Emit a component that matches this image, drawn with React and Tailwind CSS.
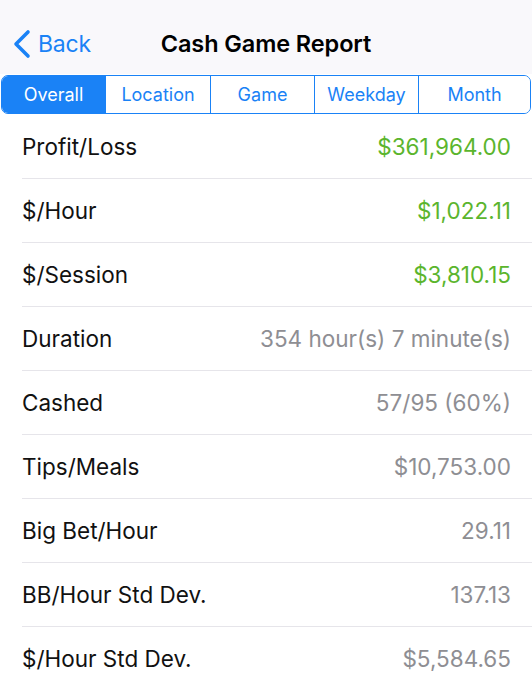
import React from 'react';

const tabs = ['Overall', 'Location', 'Game', 'Weekday', 'Month'];
const tabWidths = ['w-[103px]', 'w-[105px]', 'w-[104px]', 'w-[104px]', 'flex-1'];

const rows = [
  { label: 'Profit/Loss', value: '$361,964.00', green: true },
  { label: '$/Hour', value: '$1,022.11', green: true },
  { label: '$/Session', value: '$3,810.15', green: true },
  { label: 'Duration', value: '354 hour(s) 7 minute(s)' },
  { label: 'Cashed', value: '57/95 (60%)' },
  { label: 'Tips/Meals', value: '$10,753.00' },
  { label: 'Big Bet/Hour', value: '29.11' },
  { label: 'BB/Hour Std Dev.', value: '137.13' },
  { label: '$/Hour Std Dev.', value: '$5,584.65' },
];

const App = () => {
  return (
    <div className="w-[532px] h-[685px] overflow-hidden bg-white font-['Inter',sans-serif]">
      {/* Nav bar */}
      <div className="bg-[#f9f8fb] h-[74px] flex items-end pb-[15px] relative">
        <div className="flex items-center pl-[12px] text-[#1a82f6]">
          <svg width="20" height="30" viewBox="0 0 20 30" fill="none">
            <path d="M16 3 L4 15 L16 27" stroke="#1a82f6" strokeWidth="3.6" strokeLinecap="round" strokeLinejoin="round" />
          </svg>
          <span className="ml-[6px] text-[23px] leading-[30px] tracking-[-0.2px]">Back</span>
        </div>
        <div className="absolute left-0 right-0 bottom-[15px] text-center text-[23.5px] leading-[30px] font-semibold text-black tracking-[-0.1px]">
          Cash Game Report
        </div>
      </div>

      {/* Segmented control */}
      <div className="px-[1px] pt-[1px]">
        <div className="flex h-[39px] border border-[#1a82f6] rounded-[7px] overflow-hidden">
          {tabs.map((t, i) => (
            <div
              key={t}
              className={
                'flex items-center justify-center text-[18px] ' +
                tabWidths[i] +
                (i === 0 ? ' bg-[#1a82f6] text-white' : ' bg-white text-[#1a82f6] border-l border-[#1a82f6]')
              }
            >
              {t}
            </div>
          ))}
        </div>
      </div>

      {/* Rows */}
      <div className="pl-[22px] mt-[1px]">
        {rows.map((r) => (
          <div
            key={r.label}
            className="h-[64px] flex items-center justify-between pr-[21px] border-b border-[#e6e5ea] text-[22.5px]"
          >
            <span className="text-[#111]">{r.label}</span>
            <span className={r.green ? 'text-[#5bb52d]' : 'text-[#8e8e93]'}>{r.value}</span>
          </div>
        ))}
      </div>
    </div>
  );
};

export default App;
